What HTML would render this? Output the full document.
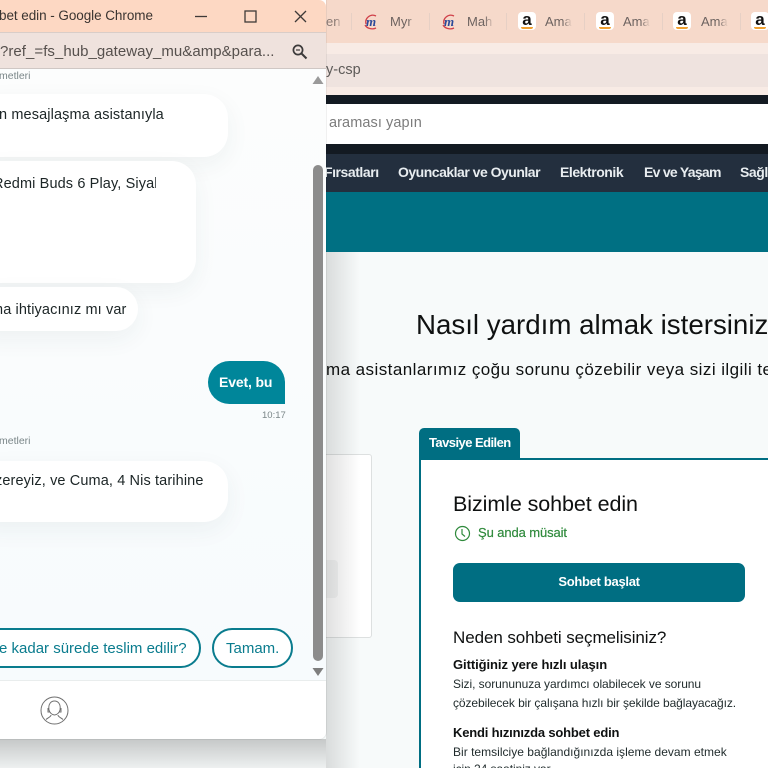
<!DOCTYPE html>
<html lang="tr"><head><meta charset="utf-8"><title>Sohbet</title>
<style>
html,body{margin:0;padding:0;width:768px;height:768px;overflow:hidden;background:#f7fafa;font-family:"Liberation Sans",sans-serif}
#w{position:relative;width:768px;height:768px;overflow:hidden}
.a{position:absolute;white-space:nowrap}
.abs{position:absolute}
.tabtxt{font-size:13px;color:#6d6360;top:14px;width:27px;overflow:hidden;-webkit-mask-image:linear-gradient(90deg,#000 65%,transparent);mask-image:linear-gradient(90deg,#000 65%,transparent)}
.sep{position:absolute;top:13px;width:1px;height:17px;background:#e6d0c5}
.ico{position:absolute;top:12px;width:18px;height:18px;border-radius:4px;background:#fff;text-align:center;font:bold 17px/15px "Liberation Sans",sans-serif;color:#111}
.ico:after{content:"";position:absolute;left:3px;right:3px;bottom:1px;height:2px;border-radius:0 0 6px 6px;background:#f0a030}
.nav{font-size:14px;font-weight:bold;color:#e8edf0;top:164px;letter-spacing:-.45px}
.bub{position:absolute;background:#fff;border-radius:24px;box-shadow:0 8px 24px rgba(40,60,70,.06)}
.msg{font-size:14.5px;color:#1c2526;letter-spacing:.12px}
.small{font-size:10.5px;color:#7a8688}
.body13{font-size:12px;color:#1f2a2b;letter-spacing:-.06px}
.b13{font-size:13px;font-weight:bold;color:#0f1111;letter-spacing:-.15px}
</style></head><body><div id="w">

<!-- background browser -->
<div class="abs" style="left:326px;top:0;width:442px;height:43px;background:#f6d9ca"></div>
<div class="abs" style="left:326px;top:43px;width:442px;height:52px;background:#f8ebe5"></div>
<div class="abs" style="left:326px;top:54px;width:442px;height:33px;background:#efe3df"></div>
<div class="a tabtxt" style="left:326px;color:#8a7a74;width:16px">en</div>
<div class="sep" style="left:351px"></div>
<svg class="abs" style="left:363px;top:13px" width="18" height="18" viewBox="0 0 18 18"><path d="M3 11a7 7 0 0 1 10-8" fill="none" stroke="#d0414a" stroke-width="1.3"/><path d="M2 12a8 7 0 0 0 11 3" fill="none" stroke="#d0414a" stroke-width="1.3"/><text x="3" y="13" font-size="13" font-weight="bold" font-style="italic" fill="#2a4a9a" font-family="Liberation Serif">m</text></svg>
<div class="a tabtxt" style="left:390px">Myr</div>
<div class="sep" style="left:429px"></div>
<svg class="abs" style="left:441px;top:13px" width="18" height="18" viewBox="0 0 18 18"><path d="M3 11a7 7 0 0 1 10-8" fill="none" stroke="#d0414a" stroke-width="1.3"/><path d="M2 12a8 7 0 0 0 11 3" fill="none" stroke="#d0414a" stroke-width="1.3"/><text x="3" y="13" font-size="13" font-weight="bold" font-style="italic" fill="#2a4a9a" font-family="Liberation Serif">m</text></svg>
<div class="a tabtxt" style="left:467px">Mah</div>
<div class="sep" style="left:506px"></div>
<div class="ico" style="left:518px">a</div>
<div class="a tabtxt" style="left:545px">Ama</div>
<div class="sep" style="left:584px"></div>
<div class="ico" style="left:596px">a</div>
<div class="a tabtxt" style="left:623px">Ama</div>
<div class="sep" style="left:662px"></div>
<div class="ico" style="left:673px">a</div>
<div class="a tabtxt" style="left:701px">Ama</div>
<div class="sep" style="left:740px"></div>
<div class="ico" style="left:751px">a</div>
<div class="a" style="left:326px;top:62px;font-size:14.5px;color:#5d5a58">y-csp</div>

<!-- Amazon top -->
<div class="abs" style="left:326px;top:95px;width:442px;height:97px;background:#131a22"></div>
<div class="abs" style="left:326px;top:104px;width:442px;height:40px;background:#fff"></div>
<div class="a" style="left:329px;top:115px;font-size:14.5px;color:#7c7c7c;letter-spacing:.08px">araması yapın</div>
<div class="abs" style="left:326px;top:154px;width:442px;height:38px;background:#232f3e"></div>
<div class="a nav" style="left:324px">Fırsatları</div>
<div class="a nav" style="left:398px;letter-spacing:-.5px">Oyuncaklar ve Oyunlar</div>
<div class="a nav" style="left:560px">Elektronik</div>
<div class="a nav" style="left:644px;letter-spacing:-.72px">Ev ve Yaşam</div>
<div class="a nav" style="left:740px">Sağlık</div>
<div class="abs" style="left:326px;top:192px;width:442px;height:60px;background:#007083"></div>

<!-- Amazon main -->
<div class="abs" style="left:326px;top:252px;width:442px;height:516px;background:#f7fafa"></div>
<div class="a" style="left:416px;top:309px;font-size:27.7px;color:#0f1111">Nasıl yardım almak istersiniz?</div>
<div class="a" style="left:326px;top:360px;font-size:17px;color:#0f1111;letter-spacing:.44px">ma asistanlarımız çoğu sorunu çözebilir veya sizi ilgili temsilciye</div>

<div class="abs" style="left:300px;top:454px;width:70px;height:182px;background:#fff;border:1px solid #dde0e0;border-radius:3px;box-sizing:content-box"></div>
<div class="abs" style="left:326px;top:560px;width:12px;height:38px;background:#f4f5f5;border-radius:0 4px 4px 0"></div>

<div class="abs" style="left:419px;top:428px;width:101px;height:31px;background:#006e82;border-radius:5px 5px 0 0"></div>
<div class="a" style="left:429px;top:435px;font-size:13px;font-weight:bold;color:#fff;letter-spacing:-.55px">Tavsiye Edilen</div>
<div class="abs" style="left:419px;top:458px;width:360px;height:320px;background:#fff;border:2px solid #006e82;box-sizing:border-box"></div>

<div class="a" style="left:453px;top:492px;font-size:21.5px;color:#0f1111;letter-spacing:-.08px">Bizimle sohbet edin</div>
<svg class="abs" style="left:454px;top:525px" width="17" height="17" viewBox="0 0 17 17"><circle cx="8.500" cy="8.500" r="7" fill="none" stroke="#2f8a3c" stroke-width="1.2"/><path d="M8 4v5l3 2.500" fill="none" stroke="#2f8a3c" stroke-width="1.2"/></svg>
<div class="a" style="left:478px;top:525px;font-size:13px;color:#2f8a3c;letter-spacing:-.1px;-webkit-text-stroke:.2px #2f8a3c">Şu anda müsait</div>
<div class="abs" style="left:453px;top:563px;width:292px;height:39px;background:#006e82;border-radius:7px"></div>
<div class="a" style="left:453px;top:574px;width:292px;text-align:center;font-size:13px;font-weight:bold;color:#fff;letter-spacing:-.3px">Sohbet başlat</div>
<div class="a" style="left:453px;top:628px;font-size:17px;color:#0f1111;letter-spacing:-.08px">Neden sohbeti seçmelisiniz?</div>
<div class="a b13" style="left:453px;top:657px;letter-spacing:-.07px">Gittiğiniz yere hızlı ulaşın</div>
<div class="a body13" style="left:453px;top:677px">Sizi, sorununuza yardımcı olabilecek ve sorunu</div>
<div class="a body13" style="left:453px;top:696px;letter-spacing:-.08px">çözebilecek bir çalışana hızlı bir şekilde bağlayacağız.</div>
<div class="a b13" style="left:453px;top:725px;letter-spacing:-.18px">Kendi hızınızda sohbet edin</div>
<div class="a body13" style="left:453px;top:745px;letter-spacing:.02px">Bir temsilciye bağlandığınızda işleme devam etmek</div>
<div class="a body13" style="left:453px;top:762px">için 24 saatiniz var.</div>

<!-- shadow of popup -->
<div class="abs" style="left:326px;top:252px;width:34px;height:516px;background:linear-gradient(90deg,rgba(0,0,0,.12),rgba(0,0,0,0))"></div>
<div class="abs" style="left:0;top:739px;width:326px;height:29px;background:linear-gradient(180deg,rgba(0,0,0,.2),rgba(0,0,0,.04))"></div>

<!-- popup window -->
<div class="abs" style="left:0;top:0;width:326px;height:739px;background:#fff;border-radius:0 0 7px 0;overflow:hidden;box-shadow:0 0 0 1px rgba(0,0,0,.06)">
  <div class="abs" style="left:0;top:0;width:326px;height:32px;background:#fdd8c3;border-radius:0 7px 0 0"></div>
  <div class="a" style="left:-1px;top:8px;font-size:13.5px;color:#3a3431;letter-spacing:-.06px">bet edin - Google Chrome</div>
  <svg class="abs" style="left:190px;top:6px" width="125" height="22" viewBox="0 0 125 22">
    <path d="M5 10.500h12" stroke="#3f3a38" stroke-width="1.3"/>
    <rect x="55" y="5" width="11" height="11" fill="none" stroke="#3f3a38" stroke-width="1.3"/>
    <path d="M105 5l11 11M116 5l-11 11" stroke="#3f3a38" stroke-width="1.3"/>
  </svg>
  <div class="abs" style="left:0;top:32px;width:326px;height:37px;background:#efe2dd;border-top:1px solid #d9cdc8;border-bottom:1px solid #cfc7c4;box-sizing:border-box"></div>
  <div class="a" style="left:0;top:43px;font-size:15px;color:#56504d;letter-spacing:.04px">?ref_=fs_hub_gateway_mu&amp;amp&amp;para...</div>
  <svg class="abs" style="left:291px;top:43px" width="18" height="18" viewBox="0 0 18 18"><circle cx="7" cy="7" r="4.600" fill="none" stroke="#3c3a3a" stroke-width="1.700"/><path d="M10.500 10.500l5 5" stroke="#3c3a3a" stroke-width="2"/><path d="M5 7h4" stroke="#3c3a3a" stroke-width="1.200"/></svg>

  <div class="abs" style="left:0;top:69px;width:326px;height:612px;background:linear-gradient(180deg,#fcfdfd,#f7fbfd)"></div>

  <div class="a small" style="left:-1px;top:70px">metleri</div>
  <div class="bub" style="left:-30px;top:94px;width:258px;height:63px"></div>
  <div class="a msg" style="left:-1px;top:107px">n mesajlaşma asistanıyla</div>
  <div class="bub" style="left:-30px;top:161px;width:226px;height:122px"></div>
  <div class="a msg" style="left:-7px;top:176px;width:163px;overflow:hidden">Redmi Buds 6 Play, Siyah</div>
  <div class="bub" style="left:-30px;top:287px;width:168px;height:44px"></div>
  <div class="a msg" style="left:-9px;top:302px">ma ihtiyacınız mı var</div>

  <div class="abs" style="left:208px;top:361px;width:77px;height:43px;background:#00869a;border-radius:22px 22px 0 22px"></div>
  <div class="a" style="left:219px;top:374px;font-size:14px;font-weight:bold;color:#fff;letter-spacing:-.15px">Evet, bu</div>
  <div class="a small" style="left:262px;top:410px;font-size:9.5px">10:17</div>

  <div class="a small" style="left:-1px;top:435px">metleri</div>
  <div class="bub" style="left:-30px;top:461px;width:258px;height:61px"></div>
  <div class="a msg" style="left:-5px;top:473px">zereyiz, ve Cuma, 4 Nis tarihine</div>

  <div class="abs" style="left:-40px;top:628px;width:241px;height:40px;border:2px solid #0a7c8e;border-radius:20px;box-sizing:border-box;background:#fff"></div>
  <div class="a" style="left:-1px;top:640px;font-size:15px;color:#0a7c8e">e kadar sürede teslim edilir?</div>
  <div class="abs" style="left:212px;top:628px;width:81px;height:40px;border:2px solid #0a7c8e;border-radius:20px;box-sizing:border-box;background:#fff"></div>
  <div class="a" style="left:226px;top:640px;font-size:15px;color:#0a7c8e">Tamam.</div>

  <!-- scrollbar -->
  <div class="abs" style="left:313px;top:165px;width:10px;height:496px;background:#8c8c8c;border-radius:5px"></div>
  <svg class="abs" style="left:312px;top:75px" width="12" height="10" viewBox="0 0 12 10"><path d="M6 1l5.500 8h-11z" fill="#9a9a9a"/></svg>
  <svg class="abs" style="left:312px;top:667px" width="12" height="10" viewBox="0 0 12 10"><path d="M.5 1h11l-5.500 8z" fill="#7e7e7e"/></svg>

  <div class="abs" style="left:0;top:680px;width:326px;height:1px;background:#e9eded"></div>
  <svg class="abs" style="left:40px;top:696px" width="29" height="29" viewBox="0 0 29 29" fill="none" stroke="#6f6f6f" stroke-width="1">
    <circle cx="14.500" cy="14.500" r="13.500"/>
    <path d="M9 14c-1-6 2-9 5.500-9s6.500 3 5.500 9c-.5 2.500-3 5-5.500 5s-5-2.500-5.500-5z"/>
    <path d="M8 12v4h1.500M21 12v4h-1.500M11 19c0 2-3 2.500-5 4.500M18 19c0 2 3 2.500 5 4.500"/>
  </svg>
</div>
</div></body></html>
